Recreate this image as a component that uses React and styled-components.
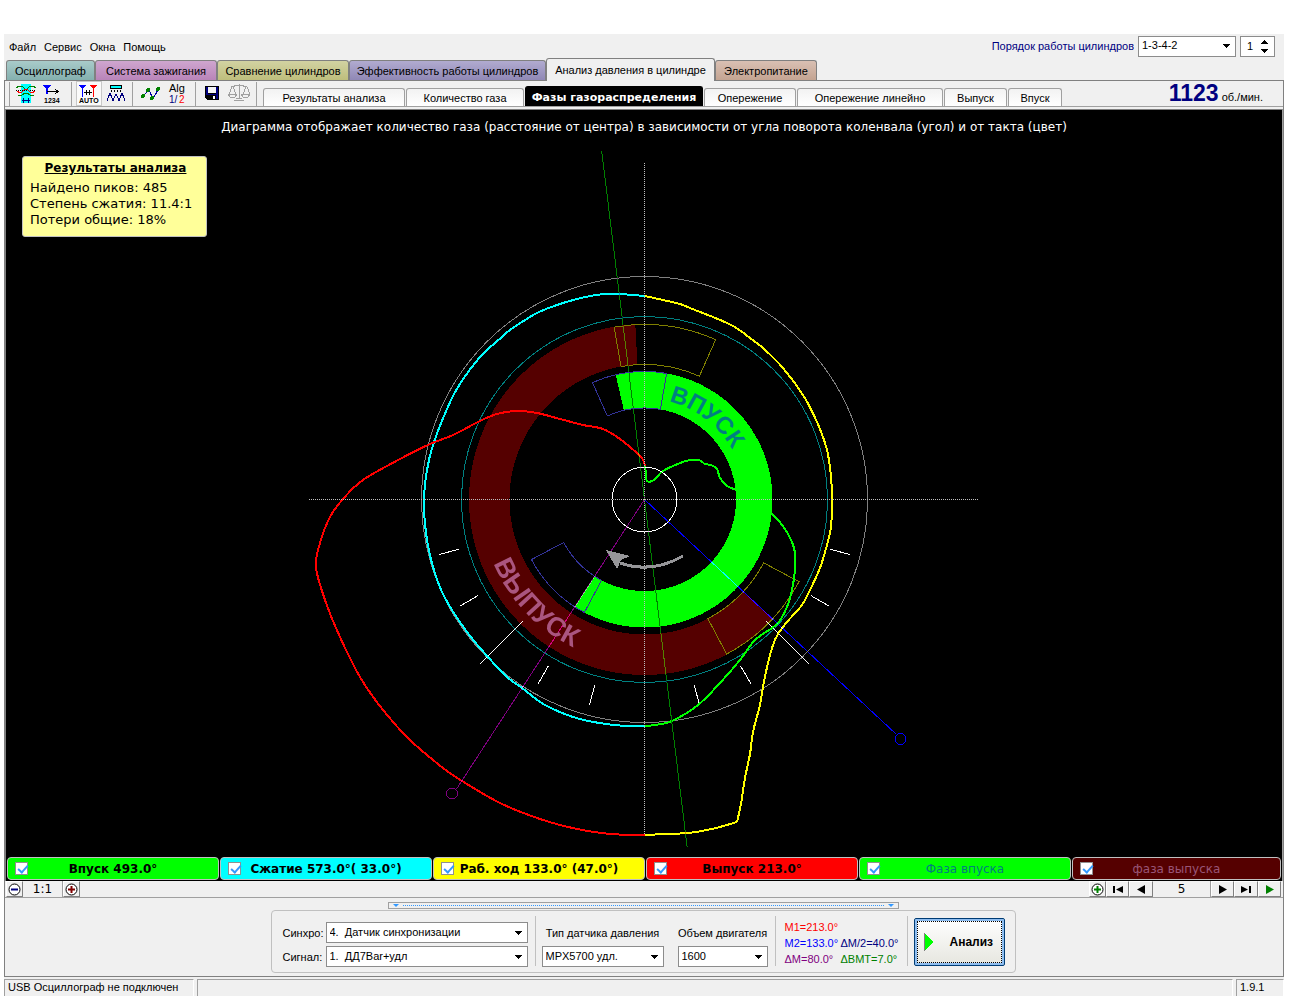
import React, { useState } from "react";
import styled, { createGlobalStyle } from "styled-components";

const GlobalStyle = createGlobalStyle`
  * {
    box-sizing: border-box;
  }

  body {
    margin: 0;
    background: #fff;
    color: #000;
    font-family: "Liberation Sans", Arial, sans-serif;
    font-size: 11px;
  }

  button,
  input,
  select {
    font: inherit;
    color: inherit;
    margin: 0;
  }
`;

const Window = styled.div`
  display: flex;
  flex-direction: column;
  min-height: 100vh;
  padding: 34px 12px 5px 4px;
`;

const Surface = styled.div`
  flex: 1;
  display: flex;
  flex-direction: column;
  background: #f0f0f0;
`;

const TopBar = styled.header`
  display: flex;
  align-items: center;
  height: 24px;
  padding: 0 9px 0 5px;
`;

const Menu = styled.nav`
  flex: 1;
  display: flex;
  gap: 8px;
`;

const MenuItem = styled.button`
  padding: 2px 0 0;
  border: none;
  background: none;
`;

const OrderLabel = styled.label`
  margin-right: 4px;
  color: #000080;
`;

const ComboBox = styled.span`
  display: grid;
  align-items: center;
  width: ${(p) => p.$width}px;
  height: 21px;
  border: 1px solid #8c8c8c;
  background: #fff;

  > * {
    grid-area: 1 / 1;
  }

  select {
    appearance: none;
    width: 100%;
    height: 100%;
    padding: 0 16px 2px 3px;
    border: none;
    background: none;
    white-space: pre;
  }

  svg {
    justify-self: end;
    margin-right: 5px;
    pointer-events: none;
  }
`;

const Spinner = styled.span`
  display: flex;
  align-items: center;
  width: 35px;
  height: 21px;
  margin-left: 4px;
  border: 1px solid #8c8c8c;
  background: #fff;

  input {
    width: 19px;
    padding: 0 0 0 6px;
    border: none;
    background: none;
    outline: none;
  }
`;

const MainTabs = styled.nav`
  display: flex;
  align-items: flex-end;
  height: 23px;
  padding-left: 2px;
  border-bottom: 1px solid #808080;
`;

const MainTab = styled.button`
  width: ${(p) => p.$width}px;
  height: ${(p) => (p.$active ? 23 : 20)}px;
  margin-bottom: ${(p) => (p.$active ? -1 : 0)}px;
  padding: 0;
  border: 1px solid #808080;
  border-bottom: none;
  border-radius: 3px 3px 0 0;
  background: ${(p) => p.$fill};
`;

const Workspace = styled.main`
  flex: 1;
  display: flex;
  flex-direction: column;
  border: 1px solid #808080;
  border-top: none;
`;

const Toolbar = styled.div`
  display: flex;
  align-items: flex-end;
  height: 26px;
  padding-left: 4px;
  border-bottom: 1px solid #a0a0a0;
`;

const Separator = styled.span`
  width: 1px;
  height: 24px;
  margin: 0 ${(p) => p.$after}px 0 ${(p) => p.$before || 0}px;
  background: #a0a0a0;
`;

const ToolButton = styled.button`
  width: 26px;
  height: 25px;
  padding: 0;
  margin-right: 1px;
  border: 1px solid ${(p) => (p.$pressed ? "#c8c8c8" : "transparent")};
  background: ${(p) => (p.$pressed ? "#fafafa" : "none")};

  svg {
    display: block;
  }
`;

const PageTabs = styled.div`
  flex: 1;
  display: flex;
  align-items: flex-end;
  gap: 1px;
  padding-left: 2px;
`;

const PageTab = styled.button`
  width: ${(p) => p.$width}px;
  height: ${(p) => (p.$active ? 20 : 18)}px;
  padding: 1px 0 0;
  border: 1px solid ${(p) => (p.$active ? "#000" : "#a0a0a0")};
  border-bottom: none;
  border-radius: 3px 3px 0 0;
  background: ${(p) =>
    p.$active ? "#000" : "linear-gradient(#f2f2f2, #ffffff)"};
  color: ${(p) => (p.$active ? "#fff" : "#000")};
  font-family: ${(p) =>
    p.$active ? '"DejaVu Sans", sans-serif' : "inherit"};
  font-weight: ${(p) => (p.$active ? "bold" : "normal")};
`;

const Speed = styled.div`
  display: flex;
  align-items: baseline;
  gap: 3px;
  padding-right: 20px;
  line-height: 17px;

  strong {
    color: #000080;
    font-size: 23px;
  }
`;

const Canvas = styled.section`
  flex: 1;
  display: grid;
  min-height: 0;
  margin: 2px 0 0 0;
  border-top: 1px solid #808080;
  border-left: 1px solid #808080;
  border-right: 1px solid #a0a0a0;
  background: #000;

  > * {
    grid-area: 1 / 1;
  }
`;

const Diagram = styled.svg`
  width: 100%;
  height: 100%;
  min-height: 0;
  isolation: isolate;
`;

const Caption = styled.h1`
  margin: 8px 0 0;
  color: #fff;
  font: 12px/18px "DejaVu Sans", sans-serif;
  text-align: center;
`;

const Note = styled.aside`
  align-self: start;
  justify-self: start;
  width: 185px;
  height: 81px;
  margin: 46px 0 0 16px;
  padding: 3px 7px;
  border: 1px solid #c0c0c0;
  border-radius: 3px;
  background: #ffff99;
  font: 13px/16px "DejaVu Sans", sans-serif;

  h2 {
    margin: 0 0 4px;
    padding-left: 2px;
    font-size: 12px;
    line-height: 16px;
    text-align: center;
    text-decoration: underline;
  }

  p {
    margin: 0;
  }
`;

const Legend = styled.div`
  display: grid;
  grid-template-columns: repeat(5, 212fr) 209fr;
  gap: 1px;
  height: 24px;
  padding: 0 1px 1px 1px;
  border-left: 1px solid #808080;
  border-right: 1px solid #a0a0a0;
  background: #000;
`;

const LegendItem = styled.label`
  display: grid;
  align-items: center;
  border: 1px solid #c0c0c0;
  border-radius: 4px;
  background: ${(p) => p.$fill};
  color: ${(p) => p.$color || "#000"};
  font-family: "DejaVu Sans", sans-serif;
  font-size: 12px;
  font-weight: ${(p) => (p.$color ? "normal" : "bold")};

  > * {
    grid-area: 1 / 1;
  }

  span {
    text-align: center;
  }

  input {
    appearance: none;
    width: 13px;
    height: 13px;
    margin-left: 7px;
    border: 1px solid #909090;
    background: #fff;
  }

  input:checked::after {
    content: "";
    display: block;
    width: 4px;
    height: 8px;
    margin: 0 0 0 4px;
    border: solid #3399ff;
    border-width: 0 2px 2px 0;
    transform: rotate(42deg);
  }
`;

const ZoomBar = styled.div`
  display: flex;
  height: 17px;
  padding: 0 2px 0 1px;
  border-bottom: 1px solid #a0a0a0;
  font: 12px/17px "DejaVu Sans", sans-serif;
  text-align: center;
`;

const SmallButton = styled.button`
  display: flex;
  align-items: center;
  justify-content: center;
  width: ${(p) => p.$width}px;
  height: 16px;
  padding: 0;
  border: 1px solid;
  border-color: #fff #808080 #808080 #fff;
  background: #f0f0f0;
`;

const ZoomValue = styled.output`
  width: ${(p) => p.$width}px;
  border-right: 1px solid #a0a0a0;
`;

const Spacer = styled.span`
  flex: 1;
`;

const Bottom = styled.div`
  display: flex;
  flex-direction: column;
  align-items: center;
  padding: 4px 2px 3px 0;
`;

const SplitHandle = styled.button`
  display: flex;
  align-items: center;
  gap: 4px;
  width: 511px;
  height: 7px;
  padding: 0 4px;
  border: 1px solid #a0a0a0;
  background: #f0f0f0;

  i {
    border: 3px solid transparent;
    border-top-color: #3399ff;
    border-bottom: none;
  }

  span {
    flex: 1;
    border-top: 1px dotted #3399ff;
  }
`;

const Settings = styled.form`
  display: flex;
  width: 745px;
  height: 63px;
  margin-top: 1px;
  padding: 5px 9px 0 11px;
  border: 1px solid #c0c0c0;
  border-radius: 4px;
`;

const Sources = styled.div`
  display: grid;
  grid-template-columns: 43px 202px;
  grid-template-rows: 21px 21px;
  gap: 3px 0;
  align-items: center;
  padding-top: 6px;
`;

const Rule = styled.span`
  width: 1px;
  height: 50px;
  margin: 0 6px 0 7px;
  background: #c0c0c0;
`;

const Field = styled.div`
  display: flex;
  flex-direction: column;
  gap: 3px;
  padding-top: 6px;
  margin-right: ${(p) => p.$after || 0}px;
  white-space: nowrap;

  label {
    height: 21px;
    padding-top: 5px;
    text-align: center;
  }
`;

const Marks = styled.div`
  display: grid;
  grid-template-columns: 56px 59px;
  grid-auto-rows: 16px;
  align-content: start;
  padding: 3px 0 0 3px;
  line-height: 16px;
  white-space: nowrap;
`;

const Mark = styled.output`
  grid-column: ${(p) => p.$column};
  color: ${(p) => p.$color};
`;

const AnalyzeButton = styled.button`
  display: flex;
  align-items: center;
  gap: 16px;
  width: 91px;
  height: 48px;
  margin-top: 2px;
  padding: 0 0 0 9px;
  border: 1px solid #003c74;
  border-radius: 2px;
  background: linear-gradient(#ffffff, #e6e6df);
  box-shadow: inset 0 0 0 2px #8ebdf0;
  outline: 1px dotted #000;
  outline-offset: -4px;
  font-weight: bold;
  font-size: 12px;
`;

const StatusBar = styled.footer`
  display: flex;
  gap: 3px;
  height: 19px;
  padding-top: 2px;
  line-height: 15px;
`;

const StatusCell = styled.span`
  flex: ${(p) => (p.$width ? `0 0 ${p.$width}px` : 1)};
  padding-left: 3px;
  border-top: 1px solid #a0a0a0;
  border-left: 1px solid #a0a0a0;
  border-right: 1px solid #fff;
`;

const CX = 644.5;
const CY = 499.5;

// angles are crankshaft degrees, clockwise from top dead centre
const polar = (r, deg) => {
  const a = (deg * Math.PI) / 180;
  return [
    +(CX + r * Math.sin(a)).toFixed(2),
    +(CY - r * Math.cos(a)).toFixed(2),
  ];
};

const sector = (inner, outer, from, to) => {
  const large = to - from > 180 ? 1 : 0;
  return [
    `M${polar(outer, from)}`,
    `A${outer} ${outer} 0 ${large} 1 ${polar(outer, to)}`,
    `L${polar(inner, to)}`,
    `A${inner} ${inner} 0 ${large} 0 ${polar(inner, from)}Z`,
  ].join(" ");
};

const smooth = (pts) => {
  let d = `M${pts[0]}`;
  for (let i = 0; i < pts.length - 1; i++) {
    const p0 = pts[i - 1] || pts[i];
    const [p1, p2] = [pts[i], pts[i + 1]];
    const p3 = pts[i + 2] || p2;
    d += ` C${p1[0] + (p2[0] - p0[0]) / 6},${p1[1] + (p2[1] - p0[1]) / 6}`;
    d += ` ${p2[0] - (p3[0] - p1[0]) / 6},${p2[1] - (p3[1] - p1[1]) / 6}`;
    d += ` ${p2[0]},${p2[1]}`;
  }
  return d;
};

const CURVES = [
  {
    color: "#00ff00",
    points: [
      [645, 465], [646, 474], [647, 481], [652, 481], [657, 477], [663, 471],
      [680, 463], [690, 460], [699, 460], [705, 464], [711, 465], [717, 469],
      [720, 478], [727, 486], [736, 490], [755, 500], [773, 515], [785, 529],
      [794, 548], [795, 568], [792, 590], [787, 607], [777, 624], [755, 640],
      [740, 660], [720, 683], [698, 705], [672, 721], [655, 725], [645, 726],
    ],
  },
  {
    color: "#00ffff",
    points: [
      [645, 726], [625, 726], [593, 722], [573, 717], [553, 709], [540, 702],
      [522, 688], [507, 677], [488, 657], [467, 632], [445, 598], [433, 567],
      [426, 533], [424, 500], [427, 470], [433, 445], [447, 409], [458, 387],
      [480, 357], [502, 337], [510, 330], [537, 313], [563, 303], [590, 296],
      [605, 294], [620, 294], [645, 296],
    ],
  },
  {
    color: "#ffff00",
    points: [
      [645, 296], [663, 300], [680, 304], [690, 308], [700, 312], [713, 317],
      [727, 323], [738, 329], [750, 338], [763, 348], [783, 368], [803, 395],
      [817, 422], [827, 450], [831, 477], [832, 500], [831, 527], [827, 545],
      [820, 568], [810, 590], [802, 605], [787, 622], [778, 634], [773, 645],
      [768, 663], [763, 687], [760, 705], [753, 732], [750, 754], [745, 778],
      [741, 804], [737, 822],
    ],
  },
  {
    color: "#ffff00",
    points: [[737, 822], [712, 829], [688, 833], [665, 834], [645, 835]],
  },
  {
    color: "#ff0000",
    points: [
      [645, 835], [610, 834], [577, 829], [540, 819], [500, 803], [462, 781],
      [443, 768], [410, 740], [383, 710], [360, 677], [340, 637], [325, 600],
      [316, 567], [320, 543], [330, 517], [343, 499], [363, 480], [400, 459],
      [430, 444], [453, 435], [480, 421], [497, 414], [517, 411], [537, 413],
      [560, 419], [583, 425], [603, 429], [620, 439], [638, 454], [643, 460],
      [645, 466],
    ],
  },
];

const TICKS = [105, 120, 135, 150, 165, 195, 210, 225, 240, 255];

const Ray = ({ deg, from = 0, to, ...rest }) => {
  const [x1, y1] = polar(from, deg);
  const [x2, y2] = polar(to, deg);
  return <line x1={x1} y1={y1} x2={x2} y2={y2} {...rest} />;
};

const PhaseDiagram = () => (
  <Diagram viewBox="6 110 1276 747" role="img" aria-label="Фазы газораспределения">
    <defs>
      <path id="intakeArc" d={`M${polar(101, 14)} A101 101 0 0 1 ${polar(101, 90)}`} />
      <path id="exhaustArc" d={`M${polar(164, 247)} A164 164 0 0 0 ${polar(164, 180)}`} />
    </defs>
    <g shapeRendering="crispEdges" fill="none">
      <circle cx={CX} cy={CY} r="223" stroke="#808080" />
      <path d={sector(135, 175.5, 133, 357)} fill="#550000" />
      <path d={sector(91.5, 128, -13, 213)} fill="#00ff00" />
      <circle cx={CX} cy={CY} r="183" stroke="#008080" />
      <path d={sector(135, 175, -10, 24)} stroke="#808000" />
      <path d={sector(135, 175, 118, 152)} stroke="#808000" />
      <path d={sector(91.5, 128, -24, 10)} stroke="#333399" />
      <path d={sector(91.5, 128, 208, 242)} stroke="#333399" />
      {TICKS.map((deg) => (
        <Ray
          key={deg}
          deg={deg}
          from={deg % 90 === 45 ? 172 : 192}
          to={deg % 90 === 45 ? 232 : 213}
          stroke="#fff"
        />
      ))}
      {CURVES.map((c, i) => (
        <path key={i} d={smooth(c.points)} stroke={c.color} strokeWidth="2" />
      ))}
      <circle cx={CX} cy={CY} r="32.5" stroke="#fff" />
      <path d="M644.5 163V835M309 499.5H979" stroke="#c0c0c0" strokeDasharray="1 1" />
      <g style={{ mixBlendMode: "difference" }}>
        <Ray deg={-7} to={351} stroke="#008000" />
        <Ray deg={173} to={350} stroke="#008000" />
        <Ray deg={133} to={344} stroke="#0000ff" />
      </g>
      <Ray deg={213} to={345} stroke="#800080" style={{ mixBlendMode: "plus-lighter" }} />
      <circle cx="900.5" cy="739" r="5.5" stroke="#0000ff" />
      <circle cx="452" cy="793.5" r="5.5" stroke="#800080" />
      <path d="M683 556Q652 574 620 563" stroke="#969699" strokeWidth="3" />
      <path d="M606 550L630 556L621 560L617 569Z" fill="#969699" />
    </g>
    <g fontFamily="Liberation Sans, Arial, sans-serif" fontWeight="bold">
      <text fontSize="24" fill="#008080">
        <textPath href="#intakeArc">ВПУСК</textPath>
      </text>
      <text fontSize="27" fill="#aa557f">
        <textPath href="#exhaustArc">ВЫПУСК</textPath>
      </text>
    </g>
  </Diagram>
);

const Icon = ({ children }) => (
  <svg width="24" height="23" viewBox="0 0 24 23" fill="none" shapeRendering="crispEdges">
    {children}
  </svg>
);

const WindowIcon = () => (
  <Icon>
    <path d="M8 2h10v19h-10z" fill="#00ffff" />
    <path d="M3 8.500h19" stroke="#000" strokeDasharray="1 1" />
    <path d="M3 6l3-2h3l3 3h2l3-3h3l3 2" stroke="#008000" />
    <path d="M4 9l3 2 2-1 3-3h2l3 3 2 1 3-2" stroke="#ff0000" />
    <path d="M5 13h4l3-2h2l3 2h4" stroke="#008000" />
    <path d="M9 18.500h8M10.500 16v5M15.500 16v5" stroke="#000080" />
  </Icon>
);

const SyncIcon = () => (
  <Icon>
    <path d="M3 3h8l-3 4v5h-2v-5z" fill="#0000ff" />
    <path d="M7 9.500h11M15 7l3 2.500-3 2.500" stroke="#000" />
    <text x="4" y="21" fontSize="7" fontFamily="Liberation Sans" fontWeight="bold" fill="#000">1234</text>
  </Icon>
);

const AutoIcon = () => (
  <Icon>
    <path d="M2 3h7l-3 4v8h-1v-8z" fill="#0000ff" />
    <path d="M13 3h7l-3 4v8h-1v-8z" fill="#ff0000" />
    <path d="M7 10.500h8M9.500 8v5M12.500 8v5" stroke="#000" />
    <text x="2" y="21" fontSize="7" fontFamily="Liberation Sans" fontWeight="bold" fill="#000">AUTO</text>
  </Icon>
);

const PeaksIcon = () => (
  <Icon>
    <path d="M6.500 3.500h11v3h-11z" fill="#00ffff" stroke="#000" />
    <path d="M7 9h1M10 9h1M13 9h1M16 9h1" stroke="#000" strokeWidth="2" />
    <path d="M3 19l1-3 2-5 2 5 1 3 1-3 2-4 2 4 1 3 1-3 2-5 2 5 1 3" stroke="#000080" />
  </Icon>
);

const PointsIcon = () => (
  <Icon>
    <path d="M5 14l6-6 4 9 6-11" stroke="#0000a0" />
    <g fill="#008000">
      <circle cx="5" cy="14" r="2" />
      <circle cx="10" cy="8" r="2" />
      <circle cx="14" cy="16" r="2" />
      <circle cx="20" cy="7" r="2" />
    </g>
  </Icon>
);

const AlgIcon = () => (
  <Icon>
    <g fontFamily="Liberation Sans">
      <text x="4" y="10" fontSize="11" fill="#000">Alg</text>
      <text x="4" y="21" fontSize="10" fill="#000080">1/</text>
      <text x="14" y="21" fontSize="10" fill="#ff0000">2</text>
    </g>
  </Icon>
);

const SaveIcon = () => (
  <Icon>
    <path d="M5 4h14v14h-12l-2-2z" fill="#000" />
    <path d="M6 5h2v8h-2zM16 5h2v12h-2zM7 12h10v1h-10z" fill="#000080" />
    <path d="M8 5h8v6h-8z" fill="#f4f4f4" />
    <path d="M13 14h2v3h-2z" fill="#fff" />
  </Icon>
);

const ScalesIcon = () => (
  <Icon>
    <path d="M4 5l7-2h2l7 2M12 2v15M7 18.500h10M9 16.500h6M5 5l-3 7M6 5l3 7M19 5l-3 7M20 5l3 7" stroke="#a0a0a0" />
    <path d="M1 12h9l-2 3h-5zM14 12h9l-2 3h-5z" stroke="#a0a0a0" />
  </Icon>
);

const DropArrow = () => (
  <svg width="7" height="4" viewBox="0 0 7 4" shapeRendering="crispEdges" aria-hidden="true">
    <path d="M0 0h7L3.500 4z" />
  </svg>
);

const ZoomMark = ({ plus, color }) => (
  <svg width="13" height="13" viewBox="0 0 13 13" fill="none">
    <circle cx="6.500" cy="6.500" r="5.500" fill="#fff" stroke="#000" />
    <path d={plus ? "M3 6.500h7M6.500 3v7" : "M3 6.500h7"} stroke={color} strokeWidth="2" />
  </svg>
);

const NavMark = ({ d, color = "#000" }) => (
  <svg width="12" height="9" viewBox="0 0 12 9">
    <path d={d} fill={color} />
  </svg>
);

const Combo = ({ id, width, value }) => (
  <ComboBox $width={width}>
    <select id={id} defaultValue={value}>
      <option>{value}</option>
    </select>
    <DropArrow />
  </ComboBox>
);

const MAIN_TABS = [
  { title: "Осциллограф", width: 89, fill: "linear-gradient(#a9cbca, #84b0ae)" },
  { title: "Система зажигания", width: 122, fill: "linear-gradient(#cfa6cf, #b984b9)" },
  { title: "Сравнение цилиндров", width: 132, fill: "linear-gradient(#d2d2a2, #bebe7c)" },
  { title: "Эффективность работы цилиндров", width: 197, fill: "linear-gradient(#b1abd0, #9088b5)" },
  { title: "Анализ давления в цилиндре", width: 169, active: true, fill: "#f0f0f0" },
  { title: "Электропитание", width: 102, fill: "linear-gradient(#d9c0b3, #c4a492)" },
];

const PAGE_TABS = [
  { title: "Результаты анализа", width: 142 },
  { title: "Количество газа", width: 118 },
  { title: "Фазы газораспределения", width: 178 },
  { title: "Опережение", width: 92 },
  { title: "Опережение линейно", width: 146 },
  { title: "Выпуск", width: 63 },
  { title: "Впуск", width: 54 },
];

const LEGEND = [
  { text: "Впуск 493.0°", fill: "#00ff00" },
  { text: "Сжатие 573.0°( 33.0°)", fill: "#00ffff" },
  { text: "Раб. ход 133.0° (47.0°)", fill: "#ffff00" },
  { text: "Выпуск 213.0°", fill: "#ff0000" },
  { text: "Фаза впуска", fill: "#00ff00", color: "#008080" },
  { text: "фаза выпуска", fill: "#550000", color: "#995577" },
];

const App = () => {
  const [page, setPage] = useState(2);

  return (
    <Window>
      <GlobalStyle />
      <Surface>
        <TopBar>
          <Menu>
            {["Файл", "Сервис", "Окна", "Помощь"].map((item) => (
              <MenuItem key={item}>{item}</MenuItem>
            ))}
          </Menu>
          <OrderLabel htmlFor="order">Порядок работы цилиндров</OrderLabel>
          <Combo id="order" width={98} value="1-3-4-2" />
          <Spinner>
            <input aria-label="Цилиндр" defaultValue="1" />
            <svg width="9" height="13" viewBox="0 0 9 13" shapeRendering="crispEdges">
              <path d="M0 4l4-4 4 4zM0 9l4 4 4-4z" />
            </svg>
          </Spinner>
        </TopBar>

        <MainTabs>
          {MAIN_TABS.map((tab) => (
            <MainTab key={tab.title} $width={tab.width} $fill={tab.fill} $active={tab.active}>
              {tab.title}
            </MainTab>
          ))}
        </MainTabs>

        <Workspace>
          <Toolbar>
            <Separator $after={2} />
            <ToolButton aria-label="Окно"><WindowIcon /></ToolButton>
            <ToolButton aria-label="Синхронизация"><SyncIcon /></ToolButton>
            <Separator $before={5} $after={4} />
            <ToolButton aria-label="Авто" $pressed><AutoIcon /></ToolButton>
            <ToolButton aria-label="Пики"><PeaksIcon /></ToolButton>
            <Separator $before={2} $after={4} />
            <ToolButton aria-label="Точки"><PointsIcon /></ToolButton>
            <ToolButton aria-label="Алгоритм"><AlgIcon /></ToolButton>
            <Separator $before={4} $after={3} />
            <ToolButton aria-label="Сохранить"><SaveIcon /></ToolButton>
            <ToolButton aria-label="Сравнить"><ScalesIcon /></ToolButton>
            <Separator $before={3} $after={4} />
            <PageTabs>
              {PAGE_TABS.map((tab, i) => (
                <PageTab
                  key={tab.title}
                  $width={tab.width}
                  $active={i === page}
                  onClick={() => setPage(i)}
                >
                  {tab.title}
                </PageTab>
              ))}
            </PageTabs>
            <Speed>
              <strong>1123</strong>
              <span>об./мин.</span>
            </Speed>
          </Toolbar>

          <Canvas>
            <PhaseDiagram />
            <Caption>
              Диаграмма отображает количество газа (расстояние от центра) в
              зависимости от угла поворота коленвала (угол) и от такта (цвет)
            </Caption>
            <Note>
              <h2>Результаты анализа</h2>
              <p>Найдено пиков: 485</p>
              <p>Степень сжатия: 11.4:1</p>
              <p>Потери общие: 18%</p>
            </Note>
          </Canvas>

          <Legend>
            {LEGEND.map((item) => (
              <LegendItem key={item.text} $fill={item.fill} $color={item.color}>
                <span>{item.text}</span>
                <input type="checkbox" defaultChecked />
              </LegendItem>
            ))}
          </Legend>

          <ZoomBar>
            <SmallButton $width={17} aria-label="Уменьшить"><ZoomMark color="#000080" /></SmallButton>
            <ZoomValue $width={40}>1:1</ZoomValue>
            <SmallButton $width={17} aria-label="Увеличить"><ZoomMark plus color="#800000" /></SmallButton>
            <Spacer />
            <SmallButton $width={17} aria-label="Добавить"><ZoomMark plus color="#008000" /></SmallButton>
            <SmallButton $width={23} aria-label="В начало"><NavMark d="M1 1h2v7h-2zM11 1v7l-7-3.500z" /></SmallButton>
            <SmallButton $width={24} aria-label="Назад"><NavMark d="M10 0v9l-8-4.500z" /></SmallButton>
            <ZoomValue $width={58}>5</ZoomValue>
            <SmallButton $width={23} aria-label="Вперёд"><NavMark d="M2 0v9l8-4.500z" /></SmallButton>
            <SmallButton $width={24} aria-label="В конец"><NavMark d="M9 1h2v7h-2zM1 1v7l7-3.500z" /></SmallButton>
            <SmallButton $width={23} aria-label="Пуск"><NavMark d="M2 0v9l8-4.500z" color="#008000" /></SmallButton>
          </ZoomBar>

          <Bottom>
            <SplitHandle aria-label="Свернуть панель">
              <i />
              <span />
              <i />
            </SplitHandle>
            <Settings onSubmit={(e) => e.preventDefault()}>
              <Sources>
                <label htmlFor="sync">Синхро:</label>
                <Combo id="sync" width={202} value={"4.\u00a0\u00a0Датчик синхронизации"} />
                <label htmlFor="signal">Сигнал:</label>
                <Combo id="signal" width={202} value={"1.\u00a0\u00a0ДД7Bar+удл"} />
              </Sources>
              <Rule />
              <Field $after={14}>
                <label htmlFor="sensor">Тип датчика давления</label>
                <Combo id="sensor" width={122} value="MPX5700 удл." />
              </Field>
              <Field>
                <label htmlFor="volume">Объем двигателя</label>
                <Combo id="volume" width={90} value="1600" />
              </Field>
              <Rule />
              <Marks>
                <Mark $column={1} $color="#ff0000">M1=213.0°</Mark>
                <Mark $column={1} $color="#0000ff">M2=133.0°</Mark>
                <Mark $column={2} $color="#000080">ΔM/2=40.0°</Mark>
                <Mark $column={1} $color="#800080">ΔM=80.0°</Mark>
                <Mark $column={2} $color="#008000">ΔBMT=7.0°</Mark>
              </Marks>
              <Rule />
              <AnalyzeButton>
                <svg width="10" height="20" viewBox="0 0 10 20" shapeRendering="crispEdges">
                  <path d="M0 1v18l10-9z" fill="#00ff00" />
                  <path d="M0.500 1v18" stroke="#808080" />
                </svg>
                Анализ
              </AnalyzeButton>
            </Settings>
          </Bottom>
        </Workspace>

        <StatusBar>
          <StatusCell $width={190}>USB Осциллограф не подключен</StatusCell>
          <StatusCell />
          <StatusCell $width={48}>1.9.1</StatusCell>
        </StatusBar>
      </Surface>
    </Window>
  );
};

export default App;
